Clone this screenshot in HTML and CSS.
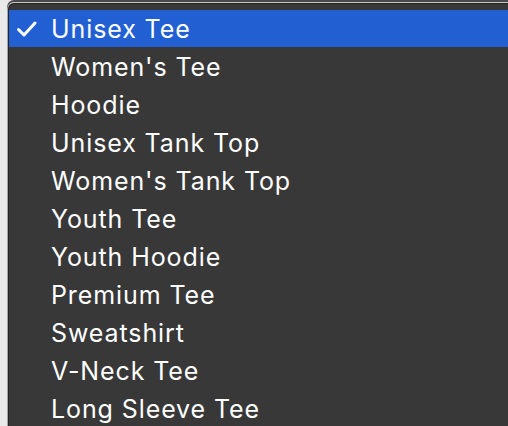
FILE: index.html
```html
<!DOCTYPE html>
<html lang="en">
<head>
    <meta charset="UTF-8">
    <meta name="viewport" content="width=device-width, initial-scale=1.0">
    <title>Product type</title>

    <link rel="stylesheet" href="styles.css">

</head>
<body>

    <!-- popup list of the select -->
    <ul class="menu">
        <li class="item selected">
            <span class="check">
                <svg width="20" height="16" viewBox="0 0 20 16"><path d="M1.5 8.5 L7 14 L18 2" fill="none" stroke="#fff" stroke-width="3" stroke-linecap="round" stroke-linejoin="round"/></svg>
            </span>
            <span class="label">Unisex Tee</span>
        </li>
        <li class="item"><span class="check"></span><span class="label">Women's Tee</span></li>
        <li class="item"><span class="check"></span><span class="label">Hoodie</span></li>
        <li class="item"><span class="check"></span><span class="label">Unisex Tank Top</span></li>
        <li class="item"><span class="check"></span><span class="label">Women's Tank Top</span></li>
        <li class="item"><span class="check"></span><span class="label">Youth Tee</span></li>
        <li class="item"><span class="check"></span><span class="label">Youth Hoodie</span></li>
        <li class="item"><span class="check"></span><span class="label">Premium Tee</span></li>
        <li class="item"><span class="check"></span><span class="label">Sweatshirt</span></li>
        <li class="item"><span class="check"></span><span class="label">V-Neck Tee</span></li>
        <li class="item"><span class="check"></span><span class="label">Long Sleeve Tee</span></li>
    </ul>

</body>
</html>
```
FILE: styles.css
```css
html, body {
    margin: 0;
    height: 100%;
    overflow: hidden;
}

body {
    background: #e9e9e9;
    font-family: Inter, "Liberation Sans", sans-serif;
}

.menu {
    list-style: none;
    margin: 2px 0 0 7px;
    padding: 7px 0 0 0;
    background: #383838;
    border-top: 1px solid #c6c6c6;
    border-left: 1px solid #a6a6a6;
    border-top-left-radius: 7px;
    box-shadow: inset 1px 1px 0 #262626, 0 -2px 0 #4a4a4a;
    height: 100%;
}

.item {
    display: flex;
    align-items: center;
    height: 38px;
    margin-left: 1px;
    color: #fff;
    font-size: 25px;
    letter-spacing: 0.9px;
}

.item.selected {
    height: 37px;
    margin-bottom: 1px;
    background: #215fd3;
}

.check {
    width: 42px;
    flex: none;
    display: flex;
    padding-left: 8px;
    box-sizing: border-box;
}

.check svg {
    display: block;
}
```
